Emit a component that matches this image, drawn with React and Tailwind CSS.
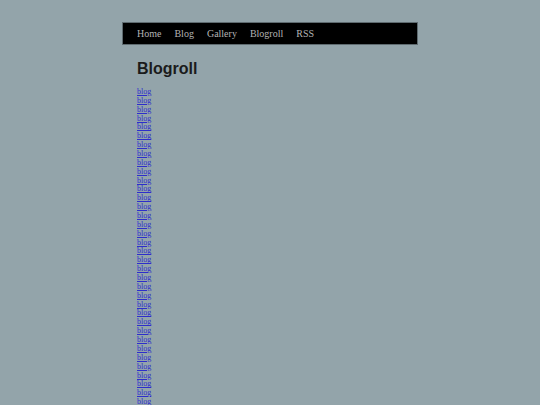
import React from 'react'

const NAV = ['Home', 'Blog', 'Gallery', 'Blogroll', 'RSS']
const LINKS = Array.from({ length: 48 }, (_, i) => i)

export default function App(){
  return (
    <div className="min-h-screen bg-[#93a4aa] pt-[22px]">
      <div className="w-[296px] ml-[122px]">
        <nav className="h-[23px] bg-black border border-[#5f6b70] flex items-center gap-[13px] pl-[14px]" style={{ fontFamily: '"Liberation Serif", serif' }}>
          {NAV.map(n => (
            <a key={n} href="#" className="text-[10px] text-[#b4b4b4] leading-none">{n}</a>
          ))}
        </nav>
        <div className="pl-[15px]">
          <h1 className="mt-[14px] text-[16px] font-bold text-[#1b1b1b] leading-[20px]" style={{ fontFamily: '"Liberation Sans", sans-serif' }}>Blogroll</h1>
          <ul className="mt-[9px]" style={{ fontFamily: '"Liberation Serif", serif' }}>
            {LINKS.map(i => (
              <li key={i} className="text-[8px] leading-[8.86px]">
                <a href="#" className="text-[#2d2dcc] underline">blog</a>
              </li>
            ))}
          </ul>
        </div>
      </div>
    </div>
  )
}
